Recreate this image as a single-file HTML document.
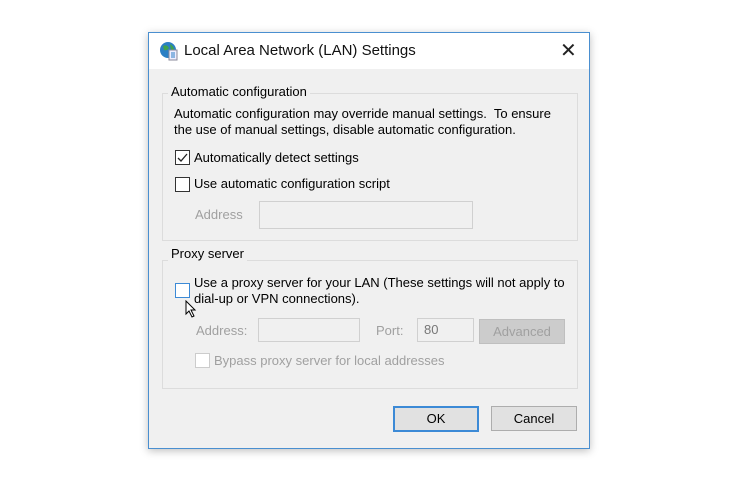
<!DOCTYPE html>
<html><head><style>
body{margin:0;width:750px;height:477px;background:#fff;position:relative;overflow:hidden;font-family:"Liberation Sans",sans-serif;font-size:13px;color:#000}
.a{position:absolute;white-space:nowrap}
.dlg{position:absolute;left:148px;top:32px;width:440px;height:415px;border:1px solid #4a8fd0;background:#f0f0f0;box-shadow:0 2px 8px rgba(0,0,0,.25)}
.tb{position:absolute;left:0;top:0;width:440px;height:36px;background:#fff}
.grp{position:absolute;border:1px solid #dcdcdc;}
.lbl{position:absolute;background:#f0f0f0;padding:0 3px}
.cb{position:absolute;width:13px;height:13px;border:1px solid #333;background:#fff}
.in{position:absolute;border:1px solid #d0d0d0;background:#f0f0f0}
.g{color:#a0a0a0}
.btn{position:absolute;height:23px;border:1px solid #adadad;background:#e1e1e1;text-align:center;line-height:23px}
</style></head><body>
<div class="dlg">
 <div class="tb">
  <svg class="a" style="left:10px;top:8px" width="20" height="20" viewBox="0 0 20 20"><circle cx="9" cy="9" r="8" fill="#2a7fc4"/><path d="M4 5 Q8 3 10 7 Q8 10 5 9Z M11 3 Q15 5 15 9 L12 9Z" fill="#3fa34d"/><rect x="10" y="9" width="8" height="10" fill="#eef" stroke="#889"/><path d="M12 12h4M12 14h4M12 16h4" stroke="#2a7fc4"/></svg>
  <div class="a" style="left:35px;top:9px;font-size:15px;color:#111">Local Area Network (LAN) Settings</div>
  <div class="a" style="left:411px;top:5px;font-size:20px;color:#222">✕</div>
 </div>
 <div class="grp" style="left:13px;top:60px;width:414px;height:146px"></div>
 <div class="lbl" style="left:19px;top:51px">Automatic configuration</div>
 <div class="a" style="left:25px;top:73px;line-height:16px">Automatic configuration may override manual settings.&nbsp; To ensure<br>the use of manual settings, disable automatic configuration.</div>
 <div class="cb" style="left:26px;top:117px"></div>
 <svg class="a" style="left:27px;top:118px" width="13" height="13"><path d="M2 7 L5 10 L11 3" stroke="#222" stroke-width="1.3" fill="none"/></svg>
 <div class="a" style="left:45px;top:117px">Automatically detect settings</div>
 <div class="cb" style="left:26px;top:144px"></div>
 <div class="a" style="left:45px;top:143px">Use automatic configuration script</div>
 <div class="a g" style="left:46px;top:174px">Address</div>
 <div class="in" style="left:110px;top:168px;width:212px;height:26px"></div>
 <div class="grp" style="left:13px;top:227px;width:414px;height:127px"></div>
 <div class="lbl" style="left:19px;top:213px">Proxy server</div>
 <div class="cb" style="left:26px;top:250px;border-color:#3c8ad6"></div>
 <div class="a" style="left:45px;top:242px;line-height:16px">Use a proxy server for your LAN (These settings will not apply to<br>dial-up or VPN connections).</div>
 <svg class="a" style="left:36px;top:267px" width="12" height="18"><path d="M1 1 L1 14 L4 11 L7 17 L9 16 L6 10 L10 10Z" fill="#fff" stroke="#000"/></svg>
 <div class="a g" style="left:47px;top:290px">Address:</div>
 <div class="in" style="left:109px;top:285px;width:100px;height:22px"></div>
 <div class="a g" style="left:227px;top:290px">Port:</div>
 <div class="in" style="left:268px;top:285px;width:55px;height:22px"></div>
 <div class="a" style="left:275px;top:289px;color:#777">80</div>
 <div class="btn g" style="left:330px;top:286px;width:84px;background:#ccc;border-color:#bfbfbf">Advanced</div>
 <div class="cb" style="left:46px;top:320px;border-color:#ccc"></div>
 <div class="a g" style="left:65px;top:320px">Bypass proxy server for local addresses</div>
 <div class="btn" style="left:244px;top:373px;width:82px;border:2px solid #3c8ad6;height:22px;line-height:22px">OK</div>
 <div class="btn" style="left:342px;top:373px;width:84px">Cancel</div>
</div>
</body></html>
